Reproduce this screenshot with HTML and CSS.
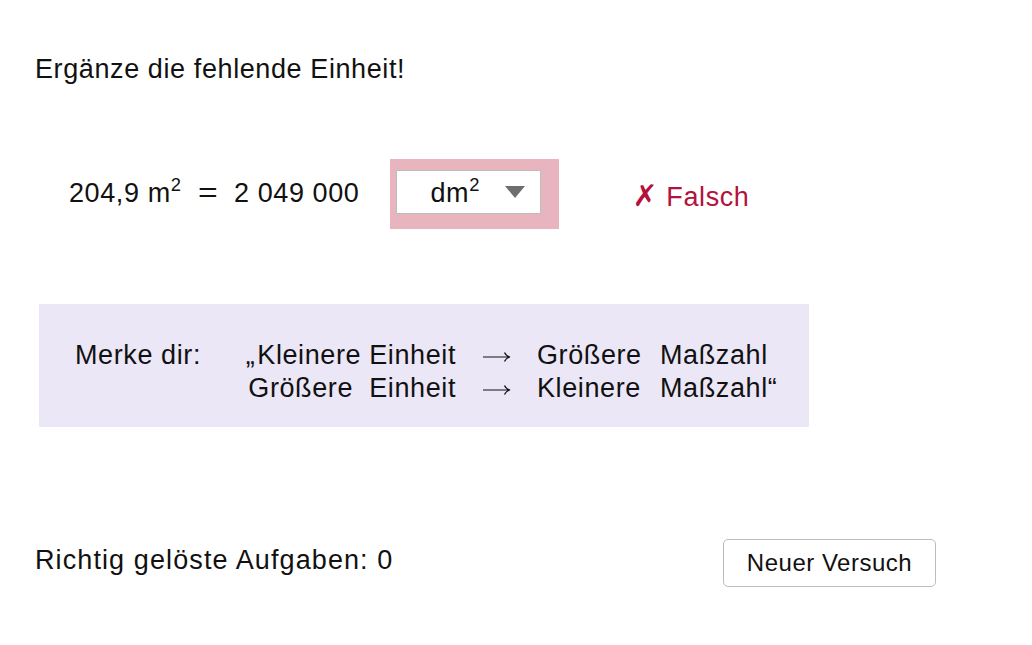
FILE: index.html
```html
<!DOCTYPE html>
<html lang="de">

<head>
    <meta charset="UTF-8">
    <meta name="viewport" content="width=device-width, initial-scale=1.0">
    <title>Einheiten ergänzen</title>
    <link rel="stylesheet" href="styles.css">
</head>

<body>
    <div class="page">
        <h1 class="task">Ergänze die fehlende Einheit!</h1>

        <!-- Aufgabe -->
        <div class="equation-row">
            <div class="equation">204,9 m<sup>2</sup><span class="eq">=</span>2 049 000</div>
            <div class="answer wrong">
                <div class="unit-select">
                    <span class="unit">dm<sup>2</sup></span>
                    <span class="caret"></span>
                </div>
            </div>
            <div class="feedback"><span class="cross">✗</span> Falsch</div>
        </div>

        <!-- Merksatz -->
        <div class="hint">
            <div class="hint-grid">
                <span class="label">Merke dir:</span>
                <span class="left"><span class="quote">„</span>Kleinere Einheit</span>
                <span class="arrow"><svg width="28" height="12" viewBox="0 0 28 12"><path d="M0 6H26.5M21.5 1.5Q23 5 27 6Q23 7 21.5 10.5" fill="none" stroke="#111" stroke-width="1.2"/></svg></span>
                <span>Größere</span>
                <span>Maßzahl</span>

                <span></span>
                <span class="left">Größere&nbsp; Einheit</span>
                <span class="arrow"><svg width="28" height="12" viewBox="0 0 28 12"><path d="M0 6H26.5M21.5 1.5Q23 5 27 6Q23 7 21.5 10.5" fill="none" stroke="#111" stroke-width="1.2"/></svg></span>
                <span>Kleinere</span>
                <span>Maßzahl“</span>
            </div>
        </div>

        <!-- Ergebnis -->
        <div class="footer">
            <div class="score">Richtig gelöste Aufgaben: 0</div>
            <button class="retry" type="button">Neuer Versuch</button>
        </div>
    </div>
</body>

</html>
```

FILE: styles.css
```css
body {
    margin: 0;
    background-color: #fff;
    color: #111;
    font-family: "Liberation Sans", Arial, sans-serif;
    font-size: 27px;
    letter-spacing: 0.6px;
}

.page {
    width: 1032px;
    height: 645px;
    overflow: hidden;
}

sup {
    font-size: 0.68em;
    line-height: 0;
    vertical-align: 0.62em;
}

.task {
    margin: 54px 0 0 35px;
    font-size: 27px;
    font-weight: normal;
    line-height: 30px;
}

.equation-row {
    display: flex;
    align-items: flex-start;
    margin-top: 75px;
    padding-left: 69px;
}

.equation {
    margin-top: 19px;
    line-height: 30px;
}

.eq {
    padding: 0 18px;
    display: inline-block;
    transform: scaleX(1.25);
}

.answer {
    margin-left: 31px;
    padding: 11px 18px 15px 6px;
}

.answer.wrong {
    background-color: #e8b5bf;
}

.unit-select {
    display: flex;
    align-items: center;
    box-sizing: border-box;
    width: 145px;
    height: 44px;
    padding-left: 33px;
    background-color: #fff;
    border: 1px solid #bdbdbd;
}

.unit {
    line-height: 30px;
    margin-top: 2px;
}

.caret {
    width: 0;
    height: 0;
    margin-left: 25px;
    border-left: 10px solid transparent;
    border-right: 10px solid transparent;
    border-top: 12px solid #6e6e6e;
}

.feedback {
    margin: 22px 0 0 73px;
    color: #b3123c;
    font-size: 27px;
    line-height: 30px;
}

.cross {
    font-family: "DejaVu Sans", sans-serif;
    font-size: 30px;
    font-weight: bold;
}

.hint {
    width: 770px;
    height: 123px;
    box-sizing: border-box;
    margin: 75px 0 0 39px;
    padding: 35px 0 0 36px;
    background-color: #ebe7f7;
}

.hint-grid {
    display: grid;
    grid-template-columns: 163px 218px 81px 123px auto;
    line-height: 33px;
}

.hint-grid .left {
    text-align: right;
}

.hint-grid .quote {
    margin-right: 2px;
}

.hint-grid .arrow {
    display: flex;
    justify-content: center;
    align-items: center;
    padding-top: 2px;
}

.footer {
    display: flex;
    justify-content: space-between;
    align-items: center;
    width: 901px;
    margin: 112px 0 0 35px;
}

.score {
    line-height: 30px;
    margin-top: -6px;
    letter-spacing: 1.1px;
}

.retry {
    width: 213px;
    height: 48px;
    background-color: #fff;
    color: #111;
    border: 1px solid #bcbcbc;
    border-radius: 5px;
    font-family: "Liberation Sans", Arial, sans-serif;
    font-size: 24px;
    letter-spacing: 0.5px;
    cursor: pointer;
}
```
